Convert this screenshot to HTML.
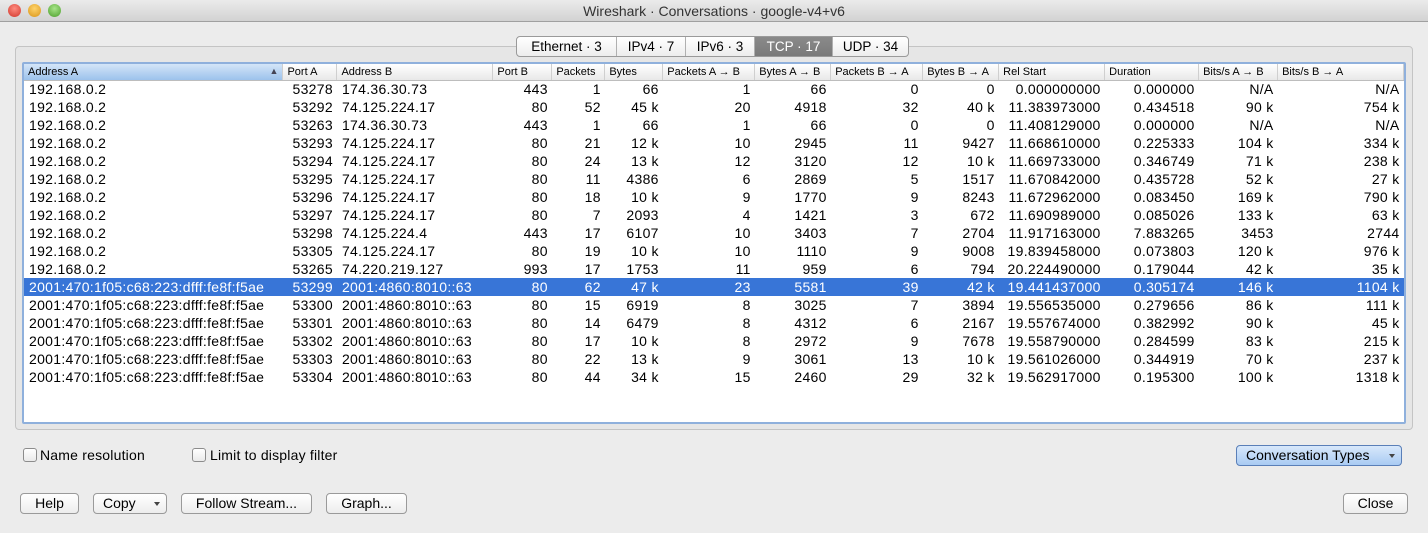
<!DOCTYPE html>
<html><head><meta charset="utf-8">
<style>
*{box-sizing:border-box}
body{margin:0;width:1428px;height:533px;background:#ececec;font-family:"Liberation Sans",sans-serif;position:relative;overflow:hidden;color:#000}
.title{position:absolute;left:0;top:0;width:1428px;height:22px;background:linear-gradient(#ebebeb,#d2d2d2);border-bottom:1px solid #a0a0a0;text-align:center;font-size:14px;line-height:22px;color:#333}
.dot{position:absolute;top:4px;width:13px;height:13px;border-radius:50%}
.panel{position:absolute;left:15px;top:46px;width:1398px;height:384px;border:1px solid #c4c4c4;border-radius:4px;background:#e6e6e6}
.tabs{position:absolute;left:516px;top:36px;height:21px;display:flex;border:1px solid #9a9a9a;border-radius:4px;background:linear-gradient(#fff,#ededed);font-size:13.5px;overflow:hidden;z-index:2}
.tabs div{line-height:19px;text-align:center;border-right:1px solid #b0b0b0}
.tabs div:last-child{border-right:none}
.tabs .sel{background:linear-gradient(#8a8a8a,#7a7a7a);color:#fff}
.tbl{position:absolute;left:22px;top:62px;width:1384px;height:362px;background:#fff;border:2px solid #8fb0dc;border-radius:2px;overflow:hidden}
table{border-collapse:collapse;table-layout:fixed;font-size:14px;letter-spacing:.3px;position:absolute;left:0;top:0}
th{height:16px;font-size:11px;letter-spacing:0;font-weight:normal;text-align:left;padding:0 4px;background:linear-gradient(#fff,#e8e8e8);border-bottom:1px solid #bdbdbd;border-right:1px solid #cfcfcf;white-space:nowrap;overflow:hidden}
th.a{background:linear-gradient(#d4e5f8,#9cc2ec)}
td{height:18px;padding:0 4px;text-align:right;white-space:nowrap;overflow:hidden}
td.l{text-align:left;padding-left:5px}
tr.s td{background:#3875d7;color:#fff}
.cb{position:absolute;width:14px;height:14px;border:1px solid #8c8c8c;border-radius:3px;background:linear-gradient(#fff,#eaeaea)}
.lbl{position:absolute;font-size:14px;letter-spacing:.2px}
.btn{position:absolute;height:21px;border:1px solid #9a9a9a;border-radius:4px;background:linear-gradient(#fff,#ededed);font-size:14px;line-height:19px;text-align:center}
.arr{position:absolute;right:6px;top:8px;border-left:3px solid transparent;border-right:3px solid transparent;border-top:4px solid #444}
</style></head><body>
<div class="title">Wireshark · Conversations · google-v4+v6
<div class="dot" style="left:8px;background:radial-gradient(circle at 50% 35%,#ff8c80,#d0362b)"></div>
<div class="dot" style="left:28px;background:radial-gradient(circle at 50% 35%,#ffd36a,#d99418)"></div>
<div class="dot" style="left:48px;background:radial-gradient(circle at 50% 35%,#a8e58a,#4b9e2b)"></div>
</div>
<div class="panel"></div>
<div class="tabs">
<div style="width:100px">Ethernet · 3</div><div style="width:69px">IPv4 · 7</div><div style="width:69px">IPv6 · 3</div><div class="sel" style="width:78px">TCP · 17</div><div style="width:75px">UDP · 34</div>
</div>
<div class="tbl">
<table>
<colgroup><col style="width:259px"><col style="width:54px"><col style="width:156px"><col style="width:59px"><col style="width:53px"><col style="width:58px"><col style="width:92px"><col style="width:76px"><col style="width:92px"><col style="width:76px"><col style="width:106px"><col style="width:94px"><col style="width:79px"><col style="width:126px"></colgroup>
<tr><th class="a">Address A<span style="float:right;font-size:9px;color:#445">▲</span></th><th>Port A</th><th>Address B</th><th>Port B</th><th>Packets</th><th>Bytes</th><th>Packets A → B</th><th>Bytes A → B</th><th>Packets B → A</th><th>Bytes B → A</th><th>Rel Start</th><th>Duration</th><th>Bits/s A → B</th><th>Bits/s B → A</th></tr>
<tr><td class="l">192.168.0.2</td><td>53278</td><td class="l">174.36.30.73</td><td>443</td><td>1</td><td>66</td><td>1</td><td>66</td><td>0</td><td>0</td><td>0.000000000</td><td>0.000000</td><td>N/A</td><td>N/A</td></tr>
<tr><td class="l">192.168.0.2</td><td>53292</td><td class="l">74.125.224.17</td><td>80</td><td>52</td><td>45 k</td><td>20</td><td>4918</td><td>32</td><td>40 k</td><td>11.383973000</td><td>0.434518</td><td>90 k</td><td>754 k</td></tr>
<tr><td class="l">192.168.0.2</td><td>53263</td><td class="l">174.36.30.73</td><td>443</td><td>1</td><td>66</td><td>1</td><td>66</td><td>0</td><td>0</td><td>11.408129000</td><td>0.000000</td><td>N/A</td><td>N/A</td></tr>
<tr><td class="l">192.168.0.2</td><td>53293</td><td class="l">74.125.224.17</td><td>80</td><td>21</td><td>12 k</td><td>10</td><td>2945</td><td>11</td><td>9427</td><td>11.668610000</td><td>0.225333</td><td>104 k</td><td>334 k</td></tr>
<tr><td class="l">192.168.0.2</td><td>53294</td><td class="l">74.125.224.17</td><td>80</td><td>24</td><td>13 k</td><td>12</td><td>3120</td><td>12</td><td>10 k</td><td>11.669733000</td><td>0.346749</td><td>71 k</td><td>238 k</td></tr>
<tr><td class="l">192.168.0.2</td><td>53295</td><td class="l">74.125.224.17</td><td>80</td><td>11</td><td>4386</td><td>6</td><td>2869</td><td>5</td><td>1517</td><td>11.670842000</td><td>0.435728</td><td>52 k</td><td>27 k</td></tr>
<tr><td class="l">192.168.0.2</td><td>53296</td><td class="l">74.125.224.17</td><td>80</td><td>18</td><td>10 k</td><td>9</td><td>1770</td><td>9</td><td>8243</td><td>11.672962000</td><td>0.083450</td><td>169 k</td><td>790 k</td></tr>
<tr><td class="l">192.168.0.2</td><td>53297</td><td class="l">74.125.224.17</td><td>80</td><td>7</td><td>2093</td><td>4</td><td>1421</td><td>3</td><td>672</td><td>11.690989000</td><td>0.085026</td><td>133 k</td><td>63 k</td></tr>
<tr><td class="l">192.168.0.2</td><td>53298</td><td class="l">74.125.224.4</td><td>443</td><td>17</td><td>6107</td><td>10</td><td>3403</td><td>7</td><td>2704</td><td>11.917163000</td><td>7.883265</td><td>3453</td><td>2744</td></tr>
<tr><td class="l">192.168.0.2</td><td>53305</td><td class="l">74.125.224.17</td><td>80</td><td>19</td><td>10 k</td><td>10</td><td>1110</td><td>9</td><td>9008</td><td>19.839458000</td><td>0.073803</td><td>120 k</td><td>976 k</td></tr>
<tr><td class="l">192.168.0.2</td><td>53265</td><td class="l">74.220.219.127</td><td>993</td><td>17</td><td>1753</td><td>11</td><td>959</td><td>6</td><td>794</td><td>20.224490000</td><td>0.179044</td><td>42 k</td><td>35 k</td></tr>
<tr class="s"><td class="l">2001:470:1f05:c68:223:dfff:fe8f:f5ae</td><td>53299</td><td class="l">2001:4860:8010::63</td><td>80</td><td>62</td><td>47 k</td><td>23</td><td>5581</td><td>39</td><td>42 k</td><td>19.441437000</td><td>0.305174</td><td>146 k</td><td>1104 k</td></tr>
<tr><td class="l">2001:470:1f05:c68:223:dfff:fe8f:f5ae</td><td>53300</td><td class="l">2001:4860:8010::63</td><td>80</td><td>15</td><td>6919</td><td>8</td><td>3025</td><td>7</td><td>3894</td><td>19.556535000</td><td>0.279656</td><td>86 k</td><td>111 k</td></tr>
<tr><td class="l">2001:470:1f05:c68:223:dfff:fe8f:f5ae</td><td>53301</td><td class="l">2001:4860:8010::63</td><td>80</td><td>14</td><td>6479</td><td>8</td><td>4312</td><td>6</td><td>2167</td><td>19.557674000</td><td>0.382992</td><td>90 k</td><td>45 k</td></tr>
<tr><td class="l">2001:470:1f05:c68:223:dfff:fe8f:f5ae</td><td>53302</td><td class="l">2001:4860:8010::63</td><td>80</td><td>17</td><td>10 k</td><td>8</td><td>2972</td><td>9</td><td>7678</td><td>19.558790000</td><td>0.284599</td><td>83 k</td><td>215 k</td></tr>
<tr><td class="l">2001:470:1f05:c68:223:dfff:fe8f:f5ae</td><td>53303</td><td class="l">2001:4860:8010::63</td><td>80</td><td>22</td><td>13 k</td><td>9</td><td>3061</td><td>13</td><td>10 k</td><td>19.561026000</td><td>0.344919</td><td>70 k</td><td>237 k</td></tr>
<tr><td class="l">2001:470:1f05:c68:223:dfff:fe8f:f5ae</td><td>53304</td><td class="l">2001:4860:8010::63</td><td>80</td><td>44</td><td>34 k</td><td>15</td><td>2460</td><td>29</td><td>32 k</td><td>19.562917000</td><td>0.195300</td><td>100 k</td><td>1318 k</td></tr>
</table>
</div>
<div class="cb" style="left:23px;top:448px"></div><div class="lbl" style="left:40px;top:447px">Name resolution</div>
<div class="cb" style="left:192px;top:448px"></div><div class="lbl" style="left:210px;top:447px">Limit to display filter</div>
<div class="btn" style="left:1236px;top:445px;width:166px;border-color:#5a7fb8;background:linear-gradient(#d8e8fb,#a9cbf3);text-align:left;padding-left:9px">Conversation Types<span class="arr"></span></div>
<div class="btn" style="left:20px;top:493px;width:59px">Help</div>
<div class="btn" style="left:93px;top:493px;width:74px;text-align:left;padding-left:9px">Copy<span class="arr"></span></div>
<div class="btn" style="left:181px;top:493px;width:131px">Follow Stream...</div>
<div class="btn" style="left:326px;top:493px;width:81px">Graph...</div>
<div class="btn" style="left:1343px;top:493px;width:65px">Close</div>
</body></html>
